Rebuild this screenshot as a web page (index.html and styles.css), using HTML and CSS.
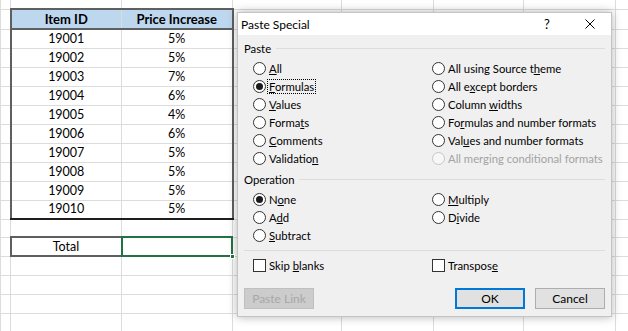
FILE: index.html
```html
<!DOCTYPE html>
<html>
    <head>
        <title>Paste Special</title>
        <link rel="stylesheet" href="styles.css">
    </head>
    <body>
        <main class="workbook">
            <table class="sheet">
                <colgroup>
                    <col class="col-a">
                    <col class="col-b">
                    <col class="col-c">
                    <col class="col-d">
                    <col class="col-e">
                    <col class="col-f">
                    <col class="col-g">
                    <col class="col-h">
                </colgroup>
                <tr class="row-top"><td></td><td></td><td></td><td></td><td></td><td></td><td></td><td></td></tr>
                <tr class="row-head">
                    <td></td>
                    <td class="data first">Item ID</td>
                    <td class="data last">Price Increase</td>
                    <td></td><td></td><td></td><td></td><td></td>
                </tr>
                <tr><td></td><td class="data first">19001</td><td class="data last">5%</td><td></td><td></td><td></td><td></td><td></td></tr>
                <tr><td></td><td class="data first">19002</td><td class="data last">5%</td><td></td><td></td><td></td><td></td><td></td></tr>
                <tr><td></td><td class="data first">19003</td><td class="data last">7%</td><td></td><td></td><td></td><td></td><td></td></tr>
                <tr><td></td><td class="data first">19004</td><td class="data last">6%</td><td></td><td></td><td></td><td></td><td></td></tr>
                <tr><td></td><td class="data first">19005</td><td class="data last">4%</td><td></td><td></td><td></td><td></td><td></td></tr>
                <tr><td></td><td class="data first">19006</td><td class="data last">6%</td><td></td><td></td><td></td><td></td><td></td></tr>
                <tr><td></td><td class="data first">19007</td><td class="data last">5%</td><td></td><td></td><td></td><td></td><td></td></tr>
                <tr><td></td><td class="data first">19008</td><td class="data last">5%</td><td></td><td></td><td></td><td></td><td></td></tr>
                <tr><td></td><td class="data first">19009</td><td class="data last">5%</td><td></td><td></td><td></td><td></td><td></td></tr>
                <tr class="row-end"><td></td><td class="data first">19010</td><td class="data last">5%</td><td></td><td></td><td></td><td></td><td></td></tr>
                <tr class="row-blank"><td></td><td></td><td></td><td></td><td></td><td></td><td></td><td></td></tr>
                <tr class="row-total">
                    <td></td>
                    <td class="total">Total</td>
                    <td class="selected"><span class="fill-handle"></span></td>
                    <td></td><td></td><td></td><td></td><td></td>
                </tr>
                <tr><td></td><td></td><td></td><td></td><td></td><td></td><td></td><td></td></tr>
                <tr><td></td><td></td><td></td><td></td><td></td><td></td><td></td><td></td></tr>
                <tr><td></td><td></td><td></td><td></td><td></td><td></td><td></td><td></td></tr>
                <tr><td></td><td></td><td></td><td></td><td></td><td></td><td></td><td></td></tr>
            </table>

            <div class="dialog">
                <div class="titlebar">
                    <span class="title">Paste Special</span>
                    <span class="title-help">?</span>
                    <span class="title-close">
                        <svg width="10" height="10" viewBox="0 0 10 10">
                            <path d="M0.5 0.5 L9.5 9.5 M9.5 0.5 L0.5 9.5" stroke="#000" stroke-width="1" fill="none"/>
                        </svg>
                    </span>
                </div>
                <div class="dialog-body">
                    <div class="group-title"><span>Paste</span></div>
                    <div class="options">
                        <div class="option"><span class="radio"></span><span><u>A</u>ll</span></div>
                        <div class="option"><span class="radio"></span><span>All using Source t<u>h</u>eme</span></div>
                        <div class="option"><span class="radio checked"></span><span class="focus"><u>F</u>ormulas</span></div>
                        <div class="option"><span class="radio"></span><span>All e<u>x</u>cept borders</span></div>
                        <div class="option"><span class="radio"></span><span><u>V</u>alues</span></div>
                        <div class="option"><span class="radio"></span><span>Column <u>w</u>idths</span></div>
                        <div class="option"><span class="radio"></span><span>Forma<u>t</u>s</span></div>
                        <div class="option"><span class="radio"></span><span>Fo<u>r</u>mulas and number formats</span></div>
                        <div class="option"><span class="radio"></span><span><u>C</u>omments</span></div>
                        <div class="option"><span class="radio"></span><span>Val<u>u</u>es and number formats</span></div>
                        <div class="option"><span class="radio"></span><span>Validatio<u>n</u></span></div>
                        <div class="option disabled"><span class="radio"></span><span>All mer<u>g</u>ing conditional formats</span></div>
                    </div>

                    <div class="group-title group-op"><span>Operation</span></div>
                    <div class="options">
                        <div class="option"><span class="radio checked"></span><span>N<u>o</u>ne</span></div>
                        <div class="option"><span class="radio"></span><span><u>M</u>ultiply</span></div>
                        <div class="option"><span class="radio"></span><span>A<u>d</u>d</span></div>
                        <div class="option"><span class="radio"></span><span>D<u>i</u>vide</span></div>
                        <div class="option"><span class="radio"></span><span><u>S</u>ubtract</span></div>
                    </div>

                    <div class="divider"></div>

                    <div class="options checks">
                        <div class="option"><span class="checkbox"></span><span>Skip <u>b</u>lanks</span></div>
                        <div class="option"><span class="checkbox"></span><span>Transpos<u>e</u></span></div>
                    </div>

                    <div class="buttons">
                        <button type="button" class="btn btn-disabled">Paste <u>L</u>ink</button>
                        <div class="buttons-right">
                            <button type="button" class="btn btn-default">OK</button>
                            <button type="button" class="btn">Cancel</button>
                        </div>
                    </div>
                </div>
            </div>
        </main>
    </body>
</html>
```

FILE: styles.css
```css
:root {
    --grid: #dcdcdc;
    --edge: #5f5f5f;
    --head-bg: #bdd7ee;
    --select: #217346;
    --dlg-bg: #f0f0f0;
    --dlg-font: 11.3px Lato, "Noto Sans", sans-serif;
}

*, *::before, *::after {
    box-sizing: border-box;
}

body {
    margin: 0px;
    width: 628px;
    height: 331px;
    overflow: hidden;
    background-color: #fff;
}

.workbook {
    position: relative;
    width: 628px;
    height: 331px;
    overflow: hidden;
}

/* spreadsheet */

.sheet {
    border-collapse: collapse;
    table-layout: fixed;
    width: 729px;
    font: 12.5px Lato, "Liberation Sans", sans-serif;
    color: #000;
}

.col-a { width: 10px; }
.col-b { width: 111px; }
.col-c { width: 111px; }
.col-d { width: 109px; }
.col-e { width: 92px; }
.col-f { width: 90px; }
.col-g { width: 92px; }
.col-h { width: 114px; }

.sheet td {
    height: 19px;
    padding: 0px;
    border: 1px solid var(--grid);
    text-align: center;
    line-height: 16px;
}

.sheet .row-top td {
    height: 9px;
    border-top: none;
}

.sheet .row-head td {
    height: 20px;
    font-size: 13px;
}

.sheet .row-blank td {
    height: 18px;
}

.sheet .row-head .data {
    background-color: var(--head-bg);
    font-weight: bold;
    border-top: 2px solid var(--edge);
    border-bottom: 2px solid var(--edge);
}

.sheet .data.first {
    border-left: 2px solid var(--edge);
}

.sheet .data.last {
    border-right: 2px solid var(--edge);
}

.sheet .row-end .data {
    border-bottom: 2px solid #1e1e1e;
}

.sheet .total {
    border: 2px solid var(--edge);
}

.sheet .selected {
    position: relative;
}

.sheet .selected::after {
    content: "";
    position: absolute;
    top: -2px;
    left: -2px;
    right: -1px;
    bottom: -1px;
    border: 2px solid var(--select);
}

.fill-handle {
    position: absolute;
    right: -3px;
    bottom: -3px;
    width: 5px;
    height: 5px;
    background-color: var(--select);
    border: 1px solid #fff;
    z-index: 2;
}

/* dialog */

.dialog {
    position: absolute;
    left: 237px;
    top: 12px;
    width: 375px;
    height: 305px;
    border: 1px solid #c4c4c4;
    background-color: var(--dlg-bg);
    box-shadow: 0px 0px 9px rgba(0, 0, 0, 0.3);
    font: var(--dlg-font);
    color: #000;
    display: flex;
    flex-direction: column;
}

.titlebar {
    display: flex;
    align-items: center;
    height: 22px;
    padding-left: 3px;
    background-color: #fff;
    font-size: 12px;
}

.title {
    flex: 1;
}

.title-help {
    width: 12px;
    margin-right: 32px;
    text-align: center;
    font-size: 13px;
}

.title-close {
    display: flex;
    margin-right: 16px;
}

.dialog-body {
    display: flex;
    flex-direction: column;
    padding: 5px 6px 0px 6px;
}

.group-title {
    display: flex;
    align-items: center;
    height: 16px;
}

.group-title::after {
    content: "";
    flex: 1;
    margin-left: 5px;
    border-top: 1px solid var(--grid);
}

.group-op {
    margin-top: 4px;
}

.options {
    display: grid;
    grid-template-columns: 179px 1fr;
    margin-top: 3px;
    padding-left: 9px;
}

.option {
    display: flex;
    align-items: center;
    gap: 3px;
    height: 18px;
    white-space: nowrap;
}

.option u {
    text-underline-offset: 1px;
}

.radio {
    display: inline-flex;
    align-items: center;
    justify-content: center;
    width: 13px;
    height: 13px;
    border: 1px solid #333;
    border-radius: 50%;
    background-color: #fff;
    flex: none;
}

.radio.checked::after {
    content: "";
    width: 7px;
    height: 7px;
    border-radius: 50%;
    background-color: #1a1a1a;
}

.option.disabled {
    color: #a3a3a3;
}

.option.disabled .radio {
    border-color: #c6c6c6;
    background-color: #f7f7f7;
}

.option.disabled u {
    text-decoration: none;
}

.focus {
    outline: 1px dotted #000;
    padding: 0px 1px;
    margin-left: -1px;
}

.checkbox {
    width: 13px;
    height: 13px;
    border: 1px solid #333;
    background-color: #fff;
    flex: none;
}

.divider {
    margin-top: 6px;
    border-top: 1px solid var(--grid);
}

.checks {
    margin-top: 5px;
}

.buttons {
    display: flex;
    justify-content: space-between;
    margin-top: 14px;
}

.buttons-right {
    display: flex;
    gap: 10px;
}

.btn {
    width: 70px;
    height: 21px;
    padding: 0px;
    font: var(--dlg-font);
    font-size: 12px;
    color: #000;
    background-color: #e1e1e1;
    border: 1px solid #adadad;
}

.btn-default {
    border: 2px solid #0078d7;
}

.btn-disabled {
    width: 70px;
    color: #a8a8a8;
    background-color: #cccccc;
    border-color: #bfbfbf;
}

.btn-disabled u {
    text-decoration: none;
}
```
